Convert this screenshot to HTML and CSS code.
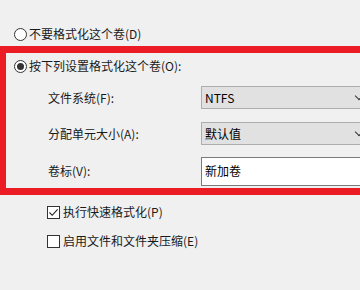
FILE: index.html
```html
<!DOCTYPE html>
<html lang="zh-CN">
<head>
<meta charset="utf-8">
<link rel="stylesheet" href="styles.css">
</head>
<body>
<div class="page">
  <div class="opt opt-top">
    <span class="radio"></span>
    <span class="txt">不要格式化这个卷(D)</span>
  </div>
  <div class="box">
    <div class="opt opt-in">
      <span class="radio checked"></span>
      <span class="txt">按下列设置格式化这个卷(O):</span>
    </div>
    <div class="grid">
      <div class="lbl">文件系统(F):</div>
      <div class="select"><span class="val">NTFS</span><span class="chev"></span></div>
      <div class="lbl">分配单元大小(A):</div>
      <div class="select"><span class="val">默认值</span><span class="chev"></span></div>
      <div class="lbl">卷标(V):</div>
      <div class="input"><span class="val">新加卷</span></div>
    </div>
  </div>
  <div class="chk chk-first">
    <span class="cbox">
      <svg width="11" height="11" viewBox="0 0 11 11"><path d="M1.5 5.5 L4.2 8.3 L9.6 2.3" fill="none" stroke="#222" stroke-width="1.1"/></svg>
    </span>
    <span class="txt">执行快速格式化(P)</span>
  </div>
  <div class="chk chk-second">
    <span class="cbox"></span>
    <span class="txt">启用文件和文件夹压缩(E)</span>
  </div>
</div>
</body>
</html>
```

FILE: styles.css
```css
html, body {
  margin: 0;
  padding: 0;
  background: #f0f0f0;
  overflow: hidden;
}
body {
  width: 360px;
  height: 290px;
  font-family: "Noto Sans CJK SC", "Noto Sans", sans-serif;
  font-size: 12px;
  color: #1a1a1a;
}
.page {
  width: 360px;
  display: flex;
  flex-direction: column;
}
.opt {
  display: flex;
  align-items: center;
  height: 20px;
  gap: 2px;
}
.opt-top {
  margin-top: 24px;
  padding-left: 14px;
}
.opt-in {
  margin-top: 3px;
  padding-left: 8px;
}
.txt {
  line-height: 20px;
  white-space: nowrap;
}
.radio {
  width: 11px;
  height: 11px;
  border: 1px solid #333;
  border-radius: 50%;
  background: #fff;
  display: flex;
  align-items: center;
  justify-content: center;
  flex: none;
}
.radio.checked::after {
  content: "";
  width: 7px;
  height: 7px;
  border-radius: 50%;
  background: #333;
}
.box {
  margin-top: 2px;
  width: 354px;
  overflow: hidden;
  border: 7px solid #ec1c24;
  border-left-width: 6px;
  border-right: none;
  padding-bottom: 1px;
}
.grid {
  margin-top: 10px;
  padding-left: 42px;
  display: grid;
  grid-template-columns: 153px 175px;
  grid-template-rows: 23px 23px 29px;
  row-gap: 13px;
  align-items: center;
}
.grid > :nth-child(5),
.grid > :nth-child(6) {
  margin-top: -3px;
}
.lbl {
  white-space: nowrap;
  line-height: 20px;
}
.select {
  height: 21px;
  border: 1px solid #adadad;
  background: #e1e1e1;
  position: relative;
  display: flex;
  align-items: center;
  padding-left: 3px;
}
.input {
  height: 27px;
  border: 1px solid #7a7a7a;
  background: #fff;
  display: flex;
  align-items: center;
  padding-left: 3px;
}
.val {
  line-height: 20px;
  color: #000;
}
.chev {
  position: absolute;
  left: 154px;
  top: 6px;
  width: 5px;
  height: 5px;
  border-right: 1px solid #333;
  border-bottom: 1px solid #333;
  transform: rotate(45deg);
}
.chk {
  display: flex;
  align-items: center;
  height: 20px;
  gap: 3px;
  padding-left: 47px;
}
.chk-first {
  margin-top: 7px;
}
.chk-second {
  margin-top: 9px;
}
.cbox {
  width: 11px;
  height: 11px;
  border: 1px solid #333;
  background: #fff;
  display: flex;
  align-items: center;
  justify-content: center;
  flex: none;
}
.cbox svg {
  display: block;
}
```
